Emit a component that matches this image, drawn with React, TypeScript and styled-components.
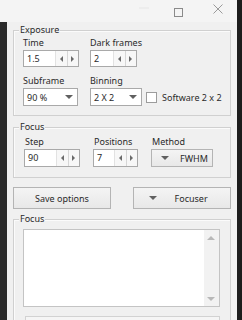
import React from "react"
import styled, { createGlobalStyle } from "styled-components"

const GlobalStyle = createGlobalStyle`
  html, body {
    margin: 0;
    padding: 0;
    width: 242px;
    height: 320px;
    overflow: hidden;
    background: #1d1d1d;
  }
  body {
    font-family: "Noto Sans", "Open Sans", sans-serif;
    font-size: 9px;
    color: #2a2a2a;
  }
`

const Screen = styled.div`
  display: flex;
  width: 242px;
  height: 320px;
`
const Main = styled.div`
  display: flex;
  flex-direction: column;
  flex: 1;
`
const RightEdge = styled.div`
  width: 10px;
  background: #1c1c1c;
`
const TitleBar = styled.div`
  height: 22px;
  background: #f4f4f4;
  display: flex;
  align-items: center;
  justify-content: flex-end;
  padding-right: 14px;
`
const TitleIcon = styled.svg<{ $gap: number; $dy?: number }>`
  margin-left: ${(p) => p.$gap}px;
  position: relative;
  top: ${(p) => p.$dy ?? 0}px;
`
const Body = styled.div`
  display: flex;
  flex: 1;
  min-height: 0;
`
const LeftEdge = styled.div`
  width: 7px;
  background: #2a2a2a;
`
const Client = styled.div`
  flex: 1;
  background: #f0f0f0;
  padding: 8px 6px 0 6px;
  display: flex;
  flex-direction: column;
  overflow: hidden;
`

const GroupBox = styled.div<{ $h?: number; $pt: number; $pl: number; $mt?: number; $open?: boolean }>`
  position: relative;
  border: 1px solid #d0d0d0;
  border-bottom: ${(p) => (p.$open ? "none" : "1px solid #d0d0d0")};
  box-shadow: inset 1px 1px 0 #fbfbfb;
  height: ${(p) => (p.$h ? `${p.$h}px` : "auto")};
  flex: ${(p) => (p.$open ? 1 : "none")};
  margin-top: ${(p) => p.$mt ?? 0}px;
  padding: ${(p) => p.$pt}px 8px 0 ${(p) => p.$pl}px;
  box-sizing: border-box;
`
const Caption = styled.span`
  position: absolute;
  top: -7px;
  left: 5px;
  padding: 0 1px;
  line-height: 12px;
  background: #f0f0f0;
`

const Grid = styled.div<{ $cols: string }>`
  display: grid;
  grid-template-columns: ${(p) => p.$cols};
  align-items: center;
`
const Label = styled.div<{ $indent?: number }>`
  line-height: 12px;
  height: 12px;
  margin-bottom: 1px;
  padding-left: ${(p) => p.$indent ?? 0}px;
  white-space: nowrap;
`
const Spacer = styled.div`
  grid-column: 1 / -1;
  height: 8px;
`

const SpinBox = styled.div<{ $w: number; $h: number }>`
  display: flex;
  width: ${(p) => p.$w}px;
  height: ${(p) => p.$h}px;
  box-sizing: border-box;
  border: 1px solid #a9a9a9;
  background: #fff;
`
const SpinText = styled.div`
  flex: 1;
  padding-left: 3px;
  line-height: 15px;
`
const SpinButtons = styled.div`
  display: flex;
  width: 22px;
  border-left: 1px solid #e2e2e2;
`
const SpinCell = styled.div<{ $sep?: boolean }>`
  flex: 1;
  display: flex;
  align-items: center;
  justify-content: center;
  background: #f7f7f7;
  border-left: ${(p) => (p.$sep ? "1px solid #d6d6d6" : "none")};
`

const Combo = styled.div<{ $w: number }>`
  display: flex;
  align-items: center;
  width: ${(p) => p.$w}px;
  height: 18px;
  box-sizing: border-box;
  border: 1px solid #a9a9a9;
  background: #fff;
`
const ComboText = styled.div`
  flex: 1;
  padding-left: 3px;
`
const ComboArrow = styled.div`
  width: 16px;
  display: flex;
  justify-content: center;
`

const CheckRow = styled.div`
  display: flex;
  align-items: center;
  gap: 5px;
  white-space: nowrap;
`
const CheckBox = styled.div`
  width: 11px;
  height: 11px;
  box-sizing: border-box;
  border: 1px solid #9c9c9c;
  background: #fff;
`

const Button = styled.div<{ $w: number; $h: number; $pl?: number; $gap?: number }>`
  display: flex;
  align-items: center;
  justify-content: ${(p) => (p.$pl != null ? "flex-start" : "center")};
  padding-left: ${(p) => p.$pl ?? 0}px;
  gap: ${(p) => p.$gap ?? 0}px;
  width: ${(p) => p.$w}px;
  height: ${(p) => p.$h}px;
  box-sizing: border-box;
  border: 1px solid #b4b4b4;
  background: linear-gradient(#f4f4f4, #e8e8e8);
`

const ButtonRow = styled.div`
  display: flex;
  justify-content: space-between;
  margin: 9px 0 10px 0;
  flex-shrink: 0;
`

const LogBox = styled.div`
  display: flex;
  height: 78px;
  box-sizing: border-box;
  border: 1px solid #c4c4c4;
  background: #fff;
  margin-right: 2px;
`
const LogText = styled.div`
  flex: 1;
`
const ScrollBar = styled.div`
  width: 15px;
  background: #f2f2f2;
  display: flex;
  flex-direction: column;
  justify-content: space-between;
  align-items: center;
  padding: 6px 0 5px;
`
const NextBox = styled.div`
  margin: 9px 2px 0 2px;
  height: 20px;
  border: 1px solid #d2d2d2;
  background: #f5f5f5;
`

const Tri = ({ dir, size = 3, color = "#555" }: { dir: "l" | "r" | "d" | "u"; size?: number; color?: string }) => {
  const pts = {
    l: `${size},0 ${size},${size * 2} 0,${size}`,
    r: `0,0 0,${size * 2} ${size},${size}`,
    d: `0,0 ${size * 2},0 ${size},${size}`,
    u: `0,${size} ${size * 2},${size} ${size},0`,
  }[dir]
  const horiz = dir === "l" || dir === "r"
  return (
    <svg width={horiz ? size : size * 2} height={horiz ? size * 2 : size}>
      <polygon points={pts} fill={color} />
    </svg>
  )
}

const Spin = ({ value, w, h = 17 }: { value: string; w: number; h?: number }) => (
  <SpinBox $w={w} $h={h}>
    <SpinText>{value}</SpinText>
    <SpinButtons>
      <SpinCell>
        <Tri dir="l" size={3} color="#6a6a6a" />
      </SpinCell>
      <SpinCell $sep>
        <Tri dir="r" size={3} color="#6a6a6a" />
      </SpinCell>
    </SpinButtons>
  </SpinBox>
)

const Drop = ({ value, w }: { value: string; w: number }) => (
  <Combo $w={w}>
    <ComboText>{value}</ComboText>
    <ComboArrow>
      <Tri dir="d" size={4} color="#606060" />
    </ComboArrow>
  </Combo>
)

const App = () => (
  <>
    <GlobalStyle />
    <Screen>
      <Main>
        <TitleBar>
          <TitleIcon width="10" height="10" $gap={0} $dy={-3}>
            <line x1="0" y1="5" x2="10" y2="5" stroke="#e6e6e6" />
          </TitleIcon>
          <TitleIcon width="9" height="9" $gap={25} $dy={1}>
            <rect x="0.5" y="0.5" width="8" height="8" fill="none" stroke="#8a8a8a" />
          </TitleIcon>
          <TitleIcon width="10" height="10" $gap={30} $dy={-2}>
            <path d="M0.5 0.5 L9.5 9.5 M9.5 0.5 L0.5 9.5" stroke="#9a9a9a" />
          </TitleIcon>
        </TitleBar>
        <Body>
          <LeftEdge />
          <Client>
            <GroupBox $h={86} $pt={6} $pl={9}>
              <Caption>Exposure</Caption>
              <Grid $cols="67px 56px 1fr">
                <Label>Time</Label>
                <Label>Dark frames</Label>
                <div />
                <Spin value="1.5" w={56} />
                <Spin value="2" w={47} />
                <div />
                <Spacer />
                <Label>Subframe</Label>
                <Label>Binning</Label>
                <div />
                <Drop value="90 %" w={55} />
                <Drop value="2 X 2" w={52} />
                <CheckRow>
                  <CheckBox />
                  Software 2 x 2
                </CheckRow>
              </Grid>
            </GroupBox>

            <GroupBox $h={51} $pt={8} $pl={10} $mt={11}>
              <Caption>Focus</Caption>
              <Grid $cols="69px 58px 1fr">
                <Label $indent={1}>Step</Label>
                <Label $indent={1}>Positions</Label>
                <Label $indent={1}>Method</Label>
                <Spin value="90" w={56} h={18} />
                <Spin value="7" w={45} h={18} />
                <Button $w={62} $h={18} $pl={9} $gap={11}>
                  <Tri dir="d" size={4} color="#606060" />
                  FWHM
                </Button>
              </Grid>
            </GroupBox>

            <ButtonRow>
              <Button $w={98} $h={22}>Save options</Button>
              <Button $w={98} $h={22} $pl={15} $gap={18}>
                <Tri dir="d" size={4} color="#606060" />
                Focuser
              </Button>
            </ButtonRow>

            <GroupBox $pt={9} $pl={9} $open>
              <Caption>Focus</Caption>
              <LogBox>
                <LogText />
                <ScrollBar>
                  <Tri dir="u" size={4} color="#b8b8b8" />
                  <Tri dir="d" size={4} color="#b8b8b8" />
                </ScrollBar>
              </LogBox>
              <NextBox />
            </GroupBox>
          </Client>
        </Body>
      </Main>
      <RightEdge />
    </Screen>
  </>
)

export default App
